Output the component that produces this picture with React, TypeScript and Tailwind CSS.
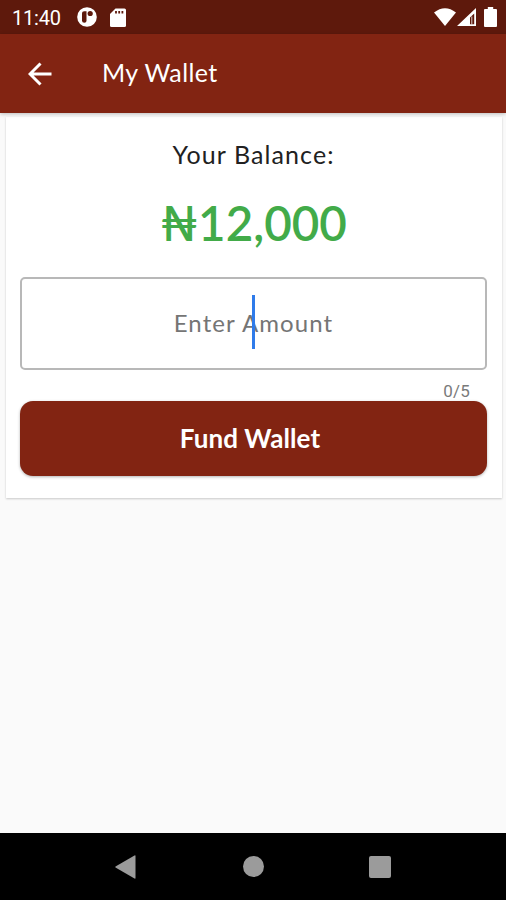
function StatusBar() {
  return (
    <div className="flex h-[34px] shrink-0 items-center justify-between bg-[#5e190c] pl-3 pr-[9px] text-white">
      <div className="flex items-center">
        <span className="w-[65px] pt-0.5 font-[Roboto] text-[20px] leading-none tracking-[-0.2px]">11:40</span>
        <svg className="h-5 w-5" viewBox="0 0 20 20">
          <circle cx="10" cy="10" r="9.8" fill="#fff" />
          <path d="M5 6.2q0-2 2.2-2h2.300v9.6q0 2-2.200 2T5 13.800z" fill="#5e190c" />
          <circle cx="13.2" cy="6.500" r="2.600" fill="#5e190c" />
        </svg>
        <svg className="ml-[13px] h-[19px] w-4" viewBox="0 0 16 19">
          <path d="M5.500.5H14.500Q16 .5 16 2v15.500q0 1.500-1.500 1.500h-13Q0 19 0 17.500V6z" fill="#fff" />
          <path d="M6 3v2.500M9.200 3v2.500M12.400 3v2.500" stroke="#5e190c" strokeWidth="1.800" />
        </svg>
      </div>
      <div className="flex items-center">
        <svg className="h-[18px] w-[22px]" viewBox="0 0 22 18">
          <path d="M0 4.500Q11-4 22 4.500L11 18z" fill="#fff" />
        </svg>
        <svg className="ml-px h-[18px] w-[19px]" viewBox="0 0 19 18">
          <path d="M19 0v18H0zM17.200 5.500l-4.200 4v6.700h4.200z" fill="#fff" fillRule="evenodd" />
          <path d="M14.800 8.500v7.700" stroke="#fff" strokeWidth="0.800" />
        </svg>
        <svg className="ml-[8px] h-5 w-[13px]" viewBox="0 0 13 20">
          <path d="M3.800 0h5.400v2H12q1 0 1 1v16q0 1-1 1H1q-1 0-1-1V3q0-1 1-1h2.800z" fill="#fff" />
        </svg>
      </div>
    </div>
  );
}

function AppBar() {
  return (
    <header className="relative flex h-[79px] shrink-0 items-center bg-[#822412] pl-[28px] text-white shadow-[0_1px_4px_rgba(0,0,0,0.25)]">
      <svg className="h-6 w-6" viewBox="0 0 24 24" fill="none" stroke="#fff" strokeWidth="3">
        <path d="M23.500 12H3M12.500 1.500L2 12l10.500 10.500" />
      </svg>
      <h1 className="ml-[50px] pb-[3px] text-[25px] leading-none tracking-[0.4px]">My Wallet</h1>
    </header>
  );
}

function WalletCard() {
  return (
    <section className="ml-[6px] mr-1 mt-1 flex h-[381px] flex-col bg-white pl-[14px] pr-[15px] pt-[23px] shadow-[0_1px_2px_rgba(0,0,0,0.2)]">
      <p className="text-center text-[25px] leading-[28px] tracking-[1.100px] text-[#212121]">Your Balance:</p>
      <p className="mt-[29px] text-center text-[47.500px] font-semibold leading-[52px] text-[#42ab49]">₦12,000</p>
      <div className="relative mt-[28px] flex h-[93px] shrink-0 items-center justify-center rounded-[5px] border-2 border-[#b8b8b8]">
        <span className="pb-0.5 text-[24px] leading-none tracking-[1.100px] text-[#757575]">Enter Amount</span>
        <span className="absolute left-[230px] top-[16px] h-[54px] w-[3px] bg-[#2f7bea]" />
      </div>
      <span className="mt-[12px] block h-[19px] pr-[17px] text-right font-[Roboto] text-[17px] leading-[18px] tracking-[0.2px] text-[#7a7a7a]">
        0/5
      </span>
      <button className="h-[75px] shrink-0 rounded-[13px] bg-[#822412] pb-px pr-[7px] text-[26px] font-bold tracking-[0.1px] text-white shadow-[0_1px_3px_rgba(0,0,0,0.3)]">
        Fund Wallet
      </button>
    </section>
  );
}

function NavBar() {
  return (
    <nav className="flex h-[67px] shrink-0 items-center justify-between bg-black pl-[115px] pr-[115px]">
      <svg className="h-6 w-[21px]" viewBox="0 0 21 24">
        <path d="M20.500 1v22q0 1-1 .5L.5 12.500q-.5-.5 0-1L19.500.5q1-.5 1 .5z" fill="#9b9b9b" />
      </svg>
      <div className="ml-px h-[21px] w-[21px] rounded-full bg-[#9b9b9b]" />
      <div className="h-[22px] w-[22px] rounded-[2px] bg-[#9b9b9b]" />
    </nav>
  );
}

export default function App() {
  return (
    <div className="flex h-[900px] w-[506px] flex-col overflow-hidden bg-[#fafafa] font-['Lato',sans-serif]">
      <StatusBar />
      <AppBar />
      <main className="flex-1">
        <WalletCard />
      </main>
      <NavBar />
    </div>
  );
}
